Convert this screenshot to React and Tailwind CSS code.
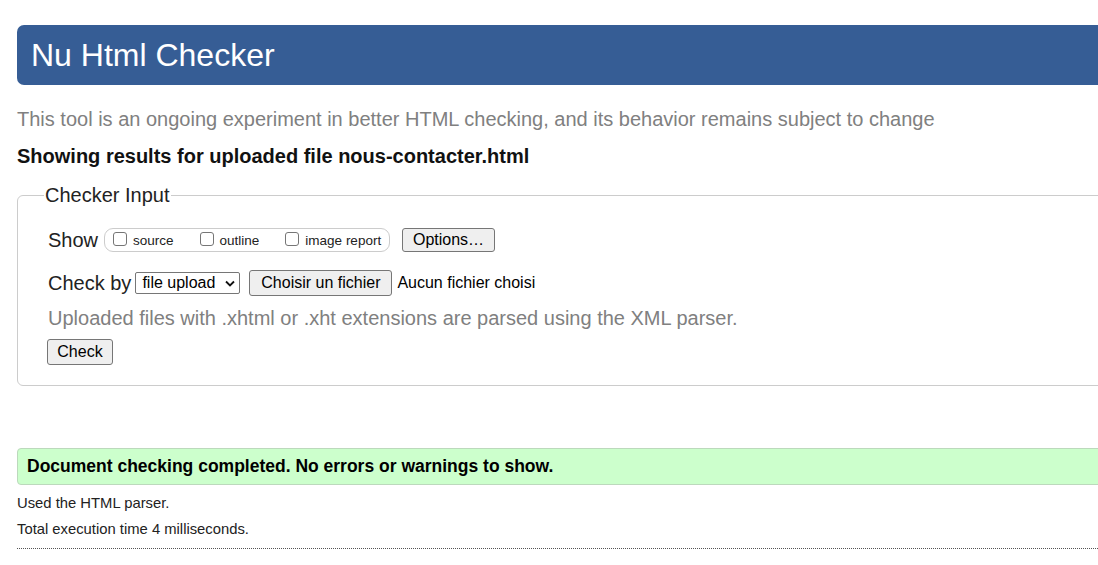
const Btn = ({ children, className = "" }) => (
  <button
    type="button"
    className={`border border-[#767676] bg-[#efefef] rounded-[3px] px-[9px] text-[16px] leading-none text-black ${className}`}
  >
    {children}
  </button>
);

const Check = ({ label }) => (
  <label className="flex items-center gap-[6px] text-[13.5px] text-[#222]">
    <span className="w-[14px] h-[14px] border border-[#767676] rounded-[3px] bg-white -mt-[3px]" />
    <span className="mt-[2px]">{label}</span>
  </label>
);

const App = () => {
  return (
    <div className="w-[1098px] h-[565px] overflow-hidden bg-white font-['Liberation_Sans',Arial,sans-serif] text-[#222]">
      <div className="w-[1200px] pl-[17px] pt-[25px]">
        <header className="h-[60px] rounded-l-[7px] bg-[#365d95] flex items-center pl-[14px]">
          <h1 className="text-[32px] leading-none text-white">Nu Html Checker</h1>
        </header>

        <p className="mt-[22px] text-[20px] leading-[24px] text-[#808080]">
          This tool is an ongoing experiment in better HTML checking, and its behavior remains subject to change
        </p>
        <p className="mt-[14px] text-[20px] leading-[22px] font-bold text-[#111]">
          Showing results for uploaded file nous-contacter.html
        </p>

        <fieldset className="mt-[16px] border border-[#cccccc] rounded-[6px] pb-[20px] pt-[8px]">
          <legend className="ml-[26px] px-[1px] text-[20px] leading-[24px] text-[#222]">Checker Input</legend>

          <div className="pl-[30px]">
            <div className="flex items-center h-[24px] mt-[13px]">
              <span className="text-[20px] leading-none">Show</span>
              <div className="ml-[6px] h-[24px] w-[286px] border border-[#cccccc] rounded-[9px] flex items-center pl-[8px] gap-[26px]">
                <Check label="source" />
                <Check label="outline" />
                <Check label="image report" />
              </div>
              <Btn className="ml-[12px] h-[24px] w-[93px] px-0">Options…</Btn>
            </div>

            <div className="flex items-center h-[26px] mt-[18px]">
              <span className="text-[20px] leading-none">Check by</span>
              <div className="ml-[4px] h-[22px] w-[105px] border border-[#767676] rounded-[2px] flex items-center justify-between pl-[6px] pr-[4px] text-[16px] text-black">
                <span>file upload</span>
                <svg width="10" height="7" viewBox="0 0 10 7">
                  <path d="M1 1.5 L5 5.5 L9 1.5" fill="none" stroke="#111" strokeWidth="1.8" />
                </svg>
              </div>
              <Btn className="ml-[9px] h-[26px] w-[143px] px-0">Choisir un fichier</Btn>
              <span className="ml-[5px] text-[16px] text-black">Aucun fichier choisi</span>
            </div>

            <p className="mt-[10px] text-[20px] leading-[24px] text-[#808080]">
              Uploaded files with .xhtml or .xht extensions are parsed using the XML parser.
            </p>

            <Btn className="mt-[9px] -ml-[1px] h-[26px] w-[66px] px-0">Check</Btn>
          </div>
        </fieldset>

        <div className="mt-[62px] h-[37px] border border-[#bcd9bc] rounded-l-[4px] bg-[#ccffcc] flex items-center pl-[9px]">
          <p className="text-[17.5px] font-bold text-black">Document checking completed. No errors or warnings to show.</p>
        </div>

        <p className="mt-[10px] text-[14.8px] leading-[16px] text-[#222]">Used the HTML parser.</p>
        <p className="mt-[10px] text-[14.8px] leading-[16px] text-[#222]">Total execution time 4 milliseconds.</p>
        <div className="mt-[11px] border-t border-dotted border-[#555]" />
      </div>
    </div>
  );
};

export default App;
